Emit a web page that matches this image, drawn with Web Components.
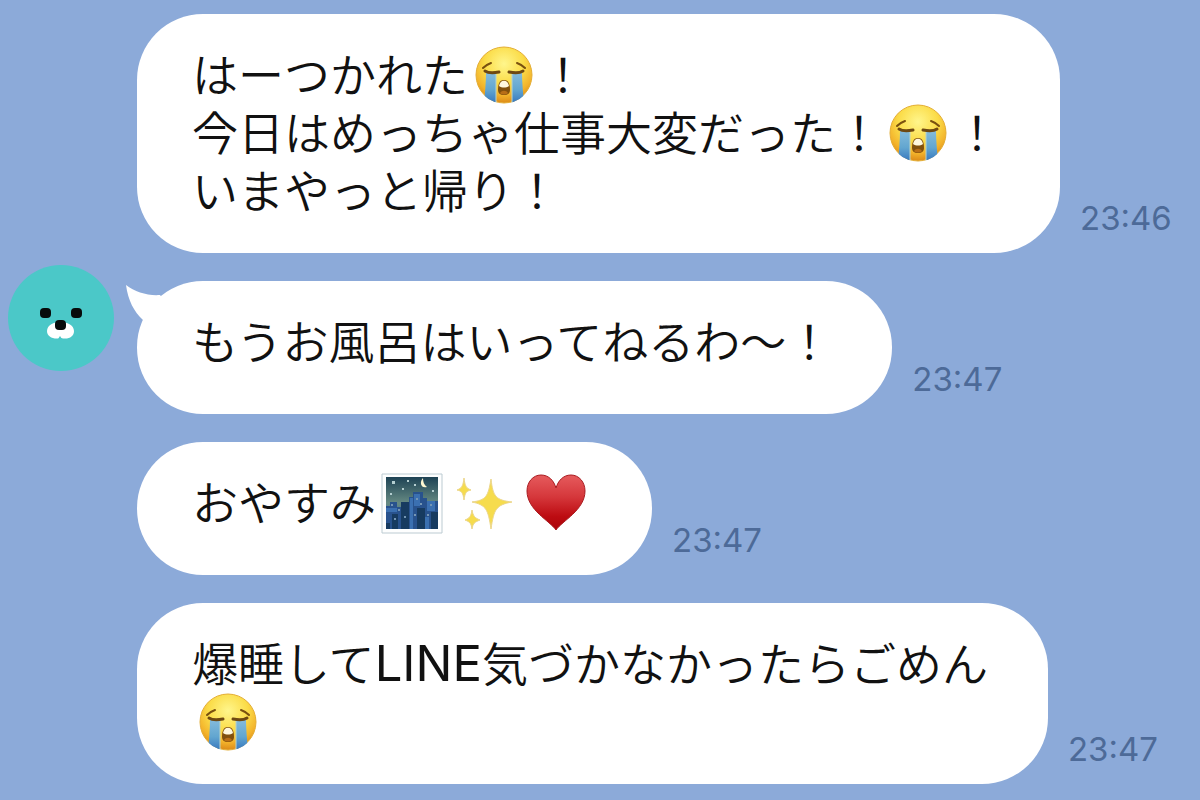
<!DOCTYPE html>
<html lang="ja">
<head>
<meta charset="utf-8">
<meta name="viewport" content="width=device-width, initial-scale=1">
<title>トーク</title>
<style>
  html { background: #8caad9; }
  body { margin: 0; font-family: Inter, "Noto Sans CJK JP", sans-serif; }
  .latin { font-size: 49px; line-height: 1; font-weight: 400; }
</style>
</head>
<body>
<chat-thread>
  <chat-message time="23:46">はーつかれた<chat-emoji name="cry"></chat-emoji>！<br>今日はめっちゃ仕事大変だった！<chat-emoji name="cry"></chat-emoji>！<br>いまやっと帰り！</chat-message>
  <chat-message time="23:47" tail><chat-avatar slot="avatar"></chat-avatar>もうお風呂はいってねるわ〜！</chat-message>
  <chat-message time="23:47">おやすみ<chat-emoji name="night"></chat-emoji><chat-emoji name="sparkles"></chat-emoji><chat-emoji name="heart"></chat-emoji></chat-message>
  <chat-message time="23:47">爆睡して<span class="latin">LINE</span>気づかなかったらごめん<br><chat-emoji name="cry"></chat-emoji></chat-message>
</chat-thread>

<template id="thread-template">
  <style>
    :host { display: block; }
    main { display: flex; flex-direction: column; gap: 28px; padding: 14px 0; }
  </style>
  <main><slot></slot></main>
</template>

<template id="message-template">
  <style>
    :host { display: block; }
    article { display: grid; grid-template-columns: 129px auto auto; justify-content: start; padding-left: 8px; }
    .avatar { margin-top: -16px; }
    .bubble {
      position: relative;
      box-sizing: border-box;
      min-height: 133px;
      padding: 32px 60px 33px 55px;
      border-radius: 66px;
      background: #fff;
      color: #111;
    }
    p { margin: 0; font-size: 46px; line-height: 58px; font-weight: 350; white-space: nowrap; }
    .tail { display: none; position: absolute; left: -11px; top: 3px; width: 44px; height: 44px; }
    :host([tail]) .tail { display: block; }
    time { align-self: end; padding: 0 0 15px 20px; font-size: 33px; line-height: 40px; color: #4d6a98; }
  </style>
  <article>
    <div class="avatar"><slot name="avatar"></slot></div>
    <div class="bubble">
      <svg class="tail" viewBox="0 0 44 44" aria-hidden="true"><path fill="#fff" d="M0 1C9 8 22 12 34 11L44 24 30 44 17 36C8 28 2 16 0 1Z"/></svg>
      <p><slot></slot></p>
    </div>
    <time></time>
  </article>
</template>

<template id="avatar-template">
  <style>
    :host { display: block; width: 106px; height: 106px; }
    svg { display: block; width: 100%; height: 100%; }
  </style>
  <svg viewBox="0 0 106 106" role="img" aria-label="アイコン">
    <circle cx="53" cy="53" r="53" fill="#4bc8c8"/>
    <path fill="#fff" d="M52 57C59 57 66 60 66 66C66 72 60 75 53 73C46 75 39 72 39 66C39 60 46 57 52 57Z"/>
    <rect x="32" y="43" width="11" height="10" rx="4" fill="#070b0b"/>
    <rect x="63" y="43" width="11" height="10" rx="4" fill="#070b0b"/>
    <rect x="47" y="55" width="11" height="10" rx="4" fill="#070b0b"/>
    <path d="M52 71l2 3-4 0Z" fill="#4bc8c8"/>
  </svg>
</template>

<template id="emoji-template">
  <style>
    :host { display: inline-block; width: 72px; height: 58px; vertical-align: top; }
    svg { display: block; width: 60px; height: 60px; margin: 0 auto; overflow: visible; }
  </style>
</template>

<template id="emoji-cry">
  <svg viewBox="0 0 60 60" role="img" aria-label="大泣き">
    <defs>
      <radialGradient id="face" cx=".5" cy=".3" r=".7"><stop offset="0" stop-color="#fff68c"/><stop offset=".5" stop-color="#fbdc48"/><stop offset=".8" stop-color="#f3b32b"/><stop offset="1" stop-color="#dc8a18"/></radialGradient>
      <linearGradient id="tear" x2="0" y2="1"><stop offset="0" stop-color="#86bcdc"/><stop offset=".55" stop-color="#62a6d0"/><stop offset="1" stop-color="#3474bd"/></linearGradient>
      <clipPath id="disc"><circle cx="30" cy="29" r="28.500"/></clipPath>
    </defs>
    <circle cx="30" cy="29" r="28" fill="url(#face)" stroke="#e4ae35" stroke-width="1"/>
    <g clip-path="url(#disc)">
      <path fill="url(#tear)" d="M12 26H22V58H10C11 46 12 36 12 26ZM38 26H48C48 36 49 46 50 58H38Z"/>
      <path fill="none" stroke="#b9d3c8" stroke-width="1" d="M22 28V58M38 28V58"/>
    </g>
    <path fill="none" stroke="#6e4912" stroke-width="3" stroke-linecap="round" d="M11 25C14 27 20 27 25 26M35 26C40 27 46 27 49 25"/>
    <path fill="none" stroke="#79500f" stroke-width="2" stroke-linecap="round" d="M9 22C11 20 14 18 17 17M43 17C46 18 49 20 51 22"/>
    <path fill="#81500d" d="M30 34C35 34 36 39 36 44C36 47 34 49 30 49C26 49 24 47 24 44C24 39 25 34 30 34Z"/>
    <path fill="#fff8df" d="M25 40C26 33 34 33 35 40C32 42 28 42 25 40Z"/>
    <path fill="#b86e17" d="M26 47C28 44 32 44 34 47C32 49 28 49 26 47Z"/>
  </svg>
</template>

<template id="emoji-night">
  <svg viewBox="0 0 60 60" role="img" aria-label="夜景">
    <defs>
      <linearGradient id="sky" x2="0" y2="1"><stop offset="0" stop-color="#1d4254"/><stop offset=".5" stop-color="#668a83"/><stop offset="1" stop-color="#315c88"/></linearGradient>
    </defs>
    <path fill="#fdfefe" stroke="#bccbd2" stroke-width="1" d="M0 0H60V59H0Z"/>
    <path fill="url(#sky)" d="M4 3H56V55H4Z"/>
    <path fill="#28528d" d="M4 32H8V28H15V33H19V28H27V23H31V18H41V24H45V27H56V55H4Z"/>
    <path fill="#173b60" d="M19 28H27V55H19ZM10 40H16V55H10ZM35 34H43V55H35ZM49 38H56V55H49ZM4 49H8V55H4Z"/>
    <path fill="#3b70b1" d="M28 24H31V55H28ZM45 27H53V37H45ZM4 34H15V38H4ZM32 20H38V32H32ZM43 43H47V55H43Z"/>
    <path fill="#7596b4" d="M9 30H11V32H9ZM16 35H18V37H16ZM34 24H36V26H34ZM38 29H40V31H38ZM48 30H50V32H48ZM32 40H34V42H32ZM45 40H47V42H45ZM12 44H14V46H12ZM22 42H24V44H22Z"/>
    <path fill="#b4ced0" d="M10 7H13V10H10ZM25 6H27V8H25ZM20 14H22V16H20ZM8 19H10V21H8ZM50 16H52V18H50ZM32 10H34V12H32Z"/>
    <path fill="#fff7d1" d="M41 4C37 8 39 15 45 13C42 11 41 8 41 4Z"/>
  </svg>
</template>

<template id="emoji-sparkles">
  <svg viewBox="0 0 60 60" role="img" aria-label="きらきら">
    <g fill="#f6dc4d" stroke="#ecd68b" stroke-width="1">
      <path d="M37 5C39 23 42 26 58 28C42 31 40 35 37 55C34 35 32 31 18 28C32 26 34 23 37 5Z"/>
      <path d="M10 4C11 12 12 14 17 16C12 17 11 19 10 26C9 19 8 17 3 16C8 14 9 12 10 4Z"/>
      <path d="M18 36C19 42 21 44 26 46C21 48 19 49 18 55C17 49 16 48 11 46C16 44 17 42 18 36Z"/>
    </g>
  </svg>
</template>

<template id="emoji-heart">
  <svg viewBox="0 0 60 60" role="img" aria-label="ハート">
    <defs><linearGradient id="red" x2="0" y2="1"><stop offset="0" stop-color="#e65b5d"/><stop offset=".4" stop-color="#d5373b"/><stop offset=".75" stop-color="#bd0c12"/><stop offset="1" stop-color="#ab0308"/></linearGradient></defs>
    <path fill="url(#red)" stroke="#a91b20" stroke-width="1" d="M30 56C24 47 1 36 1 17C1 8 7 1 15 1C23 1 28 7 30 14C32 7 37 1 45 1C53 1 59 8 59 17C59 36 36 47 30 56Z"/>
  </svg>
</template>

<script>
  const stamp = (host, id) => {
    const root = host.shadowRoot || host.attachShadow({ mode: "open" });
    root.append(document.getElementById(id).content.cloneNode(true));
    return root;
  };

  class ChatThread extends HTMLElement {
    constructor() { super(); stamp(this, "thread-template"); }
  }
  class ChatMessage extends HTMLElement {
    constructor() { super(); stamp(this, "message-template"); }
    connectedCallback() {
      const time = this.shadowRoot.querySelector("time");
      time.textContent = this.getAttribute("time");
      time.dateTime = this.getAttribute("time");
    }
  }
  class ChatAvatar extends HTMLElement {
    constructor() { super(); stamp(this, "avatar-template"); }
  }
  class ChatEmoji extends HTMLElement {
    connectedCallback() {
      if (this.shadowRoot) return;
      stamp(this, "emoji-template");
      stamp(this, "emoji-" + this.getAttribute("name"));
    }
  }
  customElements.define("chat-thread", ChatThread);
  customElements.define("chat-message", ChatMessage);
  customElements.define("chat-avatar", ChatAvatar);
  customElements.define("chat-emoji", ChatEmoji);
</script>
</body>
</html>
